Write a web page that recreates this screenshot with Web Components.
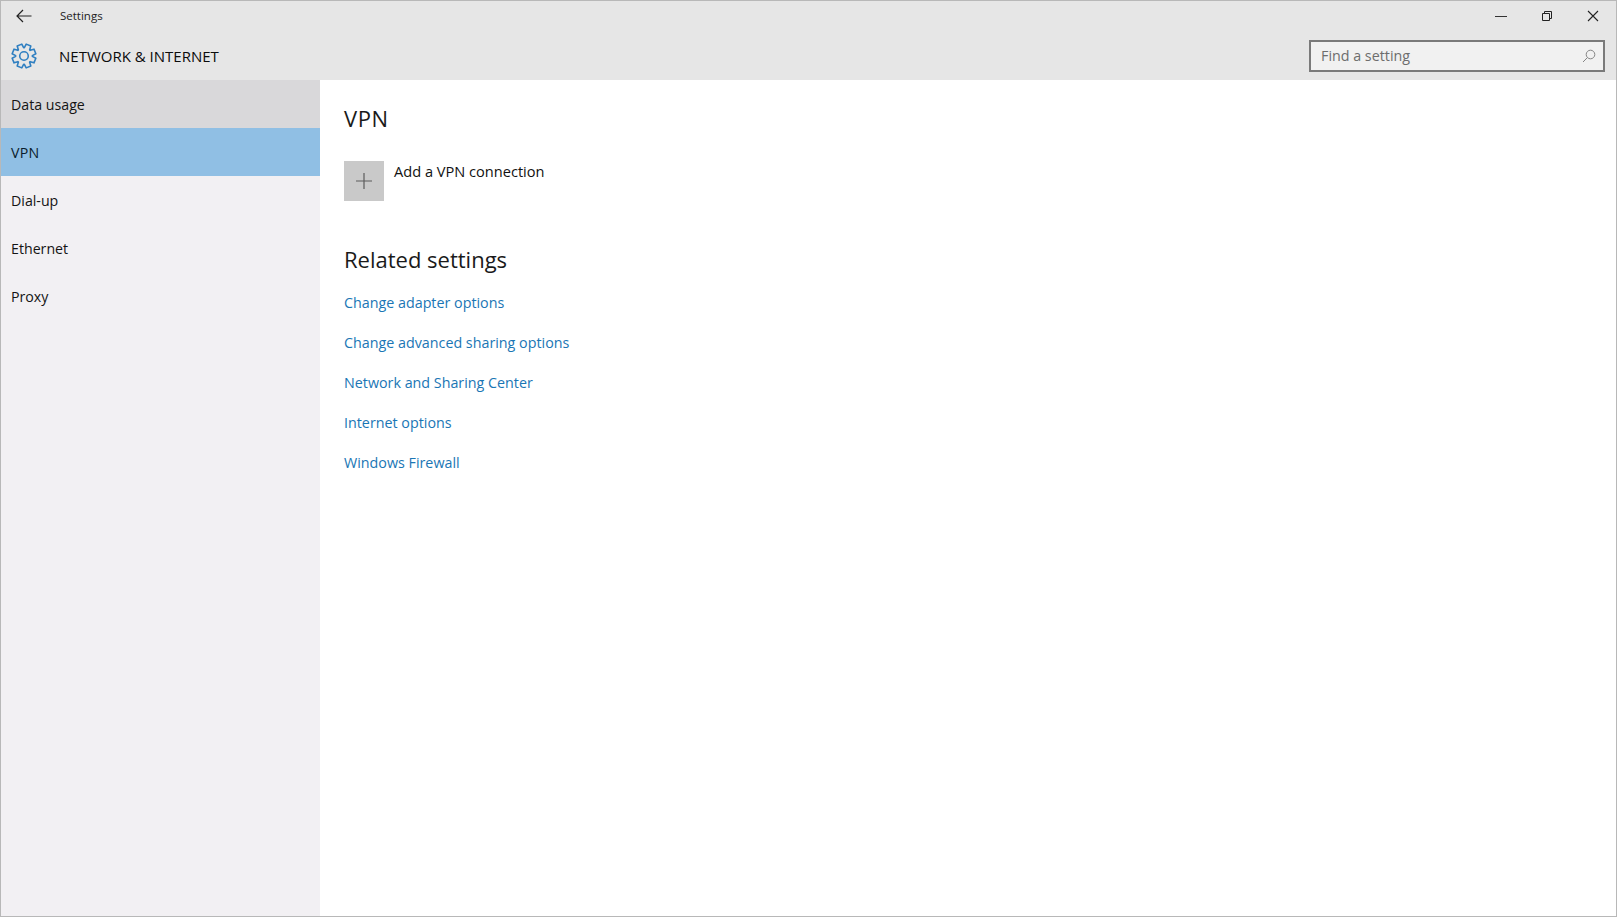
<!DOCTYPE html>
<html>
<head>
<meta charset="utf-8">
<title>Settings</title>
<style>
  html, body { margin: 0; height: 100%; background: #fff; overflow: hidden; }
  body { font-family: "Open Sans", "Noto Sans", sans-serif; color: #111; }
</style>
</head>
<body>
<settings-window>
  <settings-header slot="header" title-text="Settings" section="NETWORK &amp; INTERNET"></settings-header>
  <settings-nav slot="nav">
    <nav-item hover>Data usage</nav-item>
    <nav-item selected>VPN</nav-item>
    <nav-item>Dial-up</nav-item>
    <nav-item>Ethernet</nav-item>
    <nav-item>Proxy</nav-item>
  </settings-nav>
  <vpn-page slot="main">
    <page-link>Change adapter options</page-link>
    <page-link>Change advanced sharing options</page-link>
    <page-link>Network and Sharing Center</page-link>
    <page-link>Internet options</page-link>
    <page-link>Windows Firewall</page-link>
  </vpn-page>
</settings-window>

<script>
class SettingsWindow extends HTMLElement {
  constructor() {
    super();
    this.attachShadow({ mode: 'open' });
    this.shadowRoot.innerHTML = `
      <style>
        :host {
          display: grid;
          grid-template-columns: 319px 1fr;
          grid-template-rows: 79px 1fr;
          box-sizing: border-box;
          width: 1617px;
          height: 917px;
          border: 1px solid #b8b8b8;
          background: #fff;
        }
        .head { grid-column: 1 / 3; }
      </style>
      <div class="head"><slot name="header"></slot></div>
      <slot name="nav"></slot>
      <slot name="main"></slot>`;
  }
}

class SettingsHeader extends HTMLElement {
  constructor() {
    super();
    this.attachShadow({ mode: 'open' });
    const title = this.getAttribute('title-text');
    const section = this.getAttribute('section').replace('&', '&amp;');
    this.shadowRoot.innerHTML = `
      <style>
        :host { display: block; height: 79px; background: #e6e6e6; color: #111; }
        .top { display: flex; align-items: center; height: 29px; }
        .back { display: flex; width: 47px; padding-left: 15px; box-sizing: border-box; margin-right: 12px; }
        .title { font-size: 11.5px; color: #222; flex: 1; }
        .ctl { display: flex; }
        .ctl div { width: 46px; height: 29px; display: flex; align-items: center; justify-content: center; }
        .bottom { display: flex; align-items: center; box-sizing: border-box; height: 50px; padding-top: 2px; }
        .gear { display: flex; width: 58px; padding-left: 10px; box-sizing: border-box; }
        .section { flex: 1; font-size: 15px; font-weight: 500; color: #0c0c0c; }
        .search {
          display: flex; align-items: center; justify-content: space-between;
          box-sizing: border-box; width: 296px; height: 32px; margin: -1px 11px 0 0;
          padding: 0 7px 1px 10px; border: 2px solid #7a7a7a; background: #f1f1f1;
          font-size: 14.3px; color: #6d6d6d;
        }
        .search svg { margin-top: 1px; }
      </style>
      <div class="top">
        <div class="back">
          <svg width="16" height="14" viewBox="0 0 16 14" fill="none" stroke="#222" stroke-width="1.2">
            <path d="M1 7H15.5M7 1L1 7L7 13"/>
          </svg>
        </div>
        <div class="title">${title}</div>
        <div class="ctl">
          <div><svg width="12" height="12" viewBox="0 0 12 12" stroke="#333" fill="none"><path d="M0 6.5H12"/></svg></div>
          <div><svg width="12" height="12" viewBox="0 0 12 12" stroke="#222" fill="none"><path d="M1.5 3.5H8.5V10.5H1.5ZM3.5 3.5V1.5H10.5V8.5H8.5"/></svg></div>
          <div><svg width="12" height="12" viewBox="0 0 12 12" stroke="#222" stroke-width="1.1" fill="none"><path d="M1 1L11 11M11 1L1 11"/></svg></div>
        </div>
      </div>
      <div class="bottom">
        <div class="gear">
          <svg width="26" height="26" viewBox="-14 -14 28 28" fill="none" stroke="#2f7fc1" stroke-width="1.7" stroke-linejoin="round">
            <path d="${gearPath()}"/>
            <circle r="4.6"/>
          </svg>
        </div>
        <div class="section">${section}</div>
        <div class="search">
          <span>Find a setting</span>
          <svg width="14" height="14" viewBox="0 0 14 14" fill="none" stroke="#858585" stroke-width="1">
            <circle cx="8.5" cy="5.5" r="4.3"/><path d="M5.4 8.6L1 13"/>
          </svg>
        </div>
      </div>`;
  }
}

// outline of the 8 tooth cog
function gearPath() {
  const pts = [];
  for (let i = 0; i < 8; i++) {
    const a = (i * Math.PI) / 4 + Math.PI / 8;
    const d = Math.PI / 180;
    [[9, -20], [13, -12], [13, 12], [9, 20]].forEach(([r, off]) => {
      pts.push((r * Math.cos(a + off * d)).toFixed(2) + ' ' + (r * Math.sin(a + off * d)).toFixed(2));
    });
  }
  return 'M' + pts.join('L') + 'Z';
}

class SettingsNav extends HTMLElement {
  constructor() {
    super();
    this.attachShadow({ mode: 'open' });
    this.shadowRoot.innerHTML = `
      <style>
        :host { display: flex; flex-direction: column; background: #f2f0f3; }
      </style>
      <slot></slot>`;
  }
}

class NavItem extends HTMLElement {
  constructor() {
    super();
    this.attachShadow({ mode: 'open' });
    this.shadowRoot.innerHTML = `
      <style>
        :host {
          display: flex; align-items: center; box-sizing: border-box;
          height: 48px; padding-left: 10px; font-size: 14.2px; color: #141414;
        }
        :host([hover]) { background: #d9d8da; }
        :host([selected]) { background: #90bfe4; color: #0a1c2c; letter-spacing: .3px; }
      </style>
      <slot></slot>`;
  }
}

class VpnPage extends HTMLElement {
  constructor() {
    super();
    this.attachShadow({ mode: 'open' });
    this.shadowRoot.innerHTML = `
      <style>
        :host { display: block; padding: 24px 0 0 24px; background: #fff; }
        h2 { margin: 0; font-size: 22px; font-weight: 400; line-height: 29px; color: #1a1a1a; }
        .vpn { letter-spacing: .6px; }
        .add { display: flex; gap: 10px; margin-top: 28px; }
        .plus { display: flex; align-items: center; justify-content: center; width: 40px; height: 40px; background: #c9c9c9; }
        .add span { font-size: 14.6px; line-height: 20px; color: #111; }
        .related { margin-top: 44px; }
        .links { display: flex; flex-direction: column; margin-top: 8px; }
      </style>
      <h2 class="vpn">VPN</h2>
      <div class="add">
        <div class="plus">
          <svg width="16" height="16" viewBox="0 0 16 16" stroke="#5c5c5c" stroke-width="1.2"><path d="M8 0V16M0 8H16"/></svg>
        </div>
        <span>Add a VPN connection</span>
      </div>
      <h2 class="related">Related settings</h2>
      <div class="links"><slot></slot></div>`;
  }
}

class PageLink extends HTMLElement {
  constructor() {
    super();
    this.attachShadow({ mode: 'open' });
    this.shadowRoot.innerHTML = `
      <style>
        :host { display: flex; align-items: center; height: 40px; font-size: 14.3px; color: #1a76b5; }
      </style>
      <slot></slot>`;
  }
}

customElements.define('settings-window', SettingsWindow);
customElements.define('settings-header', SettingsHeader);
customElements.define('settings-nav', SettingsNav);
customElements.define('nav-item', NavItem);
customElements.define('vpn-page', VpnPage);
customElements.define('page-link', PageLink);
</script>
</body>
</html>
